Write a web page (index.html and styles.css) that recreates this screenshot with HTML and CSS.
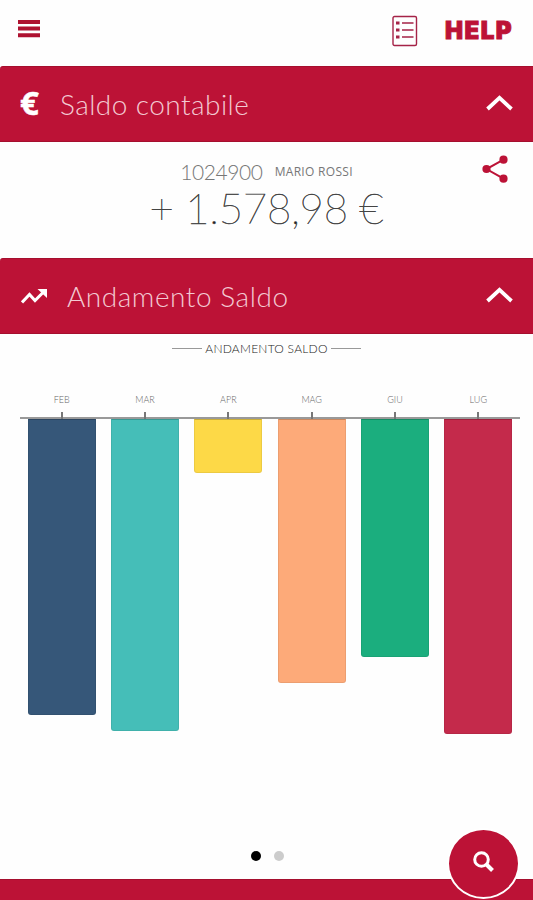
FILE: index.html
```html
<!DOCTYPE html>
<html lang="it">
<head>
<meta charset="utf-8">
<title>Saldo contabile</title>
<link rel="stylesheet" href="styles.css">
</head>
<body>
<div class="app">
  <header class="topbar">
    <svg class="menu" viewBox="0 0 22 18"><path d="M0 2h22M0 8.5h22M0 15.2h22"/></svg>
    <div class="actions">
      <svg class="list" viewBox="0 0 26 32"><rect x="1" y="1.5" width="23.5" height="29" rx="1.5"/><path d="M10 8h11.5M10 15h11.5M10 22h11.5"/><path class="bullets" d="M4 8h3.5M4 15h3.5M4 22h3.5"/></svg>
      <span class="help">HELP</span>
    </div>
  </header>
  <section>
    <div class="section-bar">
      <span class="euro">€</span>
      <h2 class="title">Saldo contabile</h2>
      <svg class="chevron" viewBox="0 0 27 16"><path d="M1.5 14 13.5 2.8 25.5 14"/></svg>
    </div>
    <div class="balance">
      <div class="account"><span class="number">1024900</span><span class="owner">MARIO ROSSI</span></div>
      <div class="amount">+ 1.578,98 €</div>
      <svg class="share" viewBox="0 0 26 28"><path d="M21.5 4.7 4.5 14l17 9.7"/><circle cx="21.5" cy="4.7" r="4.1"/><circle cx="4.5" cy="14" r="4.1"/><circle cx="21.5" cy="23.7" r="4.1"/></svg>
    </div>
  </section>
  <section class="trend">
    <div class="section-bar">
      <svg class="trend-icon" viewBox="0 0 27 16"><path class="line" d="M1 14.5 8.5 6.5l5.5 6 8.5-8.5"/><path class="tip" d="M16.5 1H26v9z"/></svg>
      <h2 class="title trend-title">Andamento Saldo</h2>
      <svg class="chevron" viewBox="0 0 27 16"><path d="M1.5 14 13.5 2.8 25.5 14"/></svg>
    </div>
    <div class="caption"><span>ANDAMENTO SALDO</span></div>
    <div class="chart">
      <div class="month"><span class="label">FEB</span><div class="bar navy" style="height:296px"></div></div>
      <div class="month"><span class="label">MAR</span><div class="bar teal" style="height:312px"></div></div>
      <div class="month"><span class="label">APR</span><div class="bar yellow" style="height:54px"></div></div>
      <div class="month"><span class="label">MAG</span><div class="bar orange" style="height:264px"></div></div>
      <div class="month"><span class="label">GIU</span><div class="bar green" style="height:238px"></div></div>
      <div class="month"><span class="label">LUG</span><div class="bar crimson" style="height:315px"></div></div>
    </div>
    <div class="dots"><i class="dot active"></i><i class="dot"></i></div>
  </section>
  <div class="next-section"></div>
  <div class="search"><svg viewBox="0 0 22 22"><circle cx="8.5" cy="8.5" r="6.8"/><path d="m13.5 13.5 6 6"/></svg></div>
</div>
</body>
</html>
```
FILE: styles.css
```css
* { box-sizing: border-box; }
body { margin: 0; background: #fefefe; font-family: Lato, "Liberation Sans", sans-serif; }
svg { display: block; fill: none; flex: none; }
.app { position: relative; height: 900px; overflow: hidden; display: flex; flex-direction: column; }
.topbar { height: 66px; flex: none; display: flex; justify-content: space-between; padding: 15px 20px 0 18px; }
.menu { width: 22px; height: 18px; margin-top: 5px; stroke: #ae1230; stroke-width: 4; }
.actions { display: flex; }
.list { width: 26px; height: 32px; margin-right: 27px; stroke: #a52347; stroke-width: 1.4; }
.list .bullets { stroke-width: 3; }
.help { width: 68px; font: 900 24px/32px Inter, sans-serif; letter-spacing: 1.5px; color: #bc1237; -webkit-text-stroke: 1px #bc1237; }
.section-bar { height: 76px; background: #bc1236; border-top: 1px solid #a50f2e; border-bottom: 1px solid #a50f2e; border-top-left-radius: 3px; display: flex; align-items: center; padding: 0 20px; color: #fff; }
.euro { width: 40px; font: 700 33px/40px "Open Sans", sans-serif; margin-top: -2px; -webkit-text-stroke: .5px #fff; }
.title { margin: -1px 0 0; flex: 1; font-size: 28px; font-weight: 300; letter-spacing: .45px; color: #f3c9d2; white-space: nowrap; }
.trend-title { letter-spacing: .55px; }
.chevron { width: 27px; height: 16px; stroke: #fff; stroke-width: 3.8; margin-top: -3px; }
.balance { position: relative; height: 116px; padding-top: 15px; text-align: center; }
.account { display: flex; justify-content: center; align-items: center; gap: 12px; height: 28px; color: #777; }
.number { font-size: 21px; font-weight: 300; letter-spacing: -.4px; }
.owner { font: 12px "Open Sans", sans-serif; letter-spacing: .3px; }
.amount { font-size: 42px; line-height: 46px; font-weight: 200; letter-spacing: -.3px; color: #222; -webkit-text-stroke: .5px #444; }
.share { position: absolute; left: 482px; top: 13px; width: 26px; height: 28px; stroke: #bc1236; stroke-width: 2; }
.share circle { fill: #bc1236; stroke: none; }
.trend { flex: 1; display: flex; flex-direction: column; }
.trend .section-bar { flex: none; }
.trend-icon { width: 27px; height: 16px; margin: 0 19px 0 1px; stroke: #fff; stroke-width: 3; }
.trend-icon .tip { fill: #fff; stroke: none; }
.caption { height: 28px; display: flex; justify-content: center; align-items: center; gap: 3px; font-size: 12px; font-weight: 300; letter-spacing: .25px; color: #222; }
.caption::before, .caption::after { content: ""; width: 30px; height: 1px; background: #999; }
.chart { height: 356px; margin: 32px 13px 0 20px; display: grid; grid-template-columns: repeat(6, 1fr); align-items: start; background: linear-gradient(#999, #999) 0 23px / 100% 2px no-repeat; }
.month { display: flex; flex-direction: column; align-items: center; }
.label { height: 25px; font-size: 9px; line-height: 12px; font-weight: 300; color: #666; background: linear-gradient(#777, #777) 50% 100% / 2px 7px no-repeat; }
.bar { width: 68px; border-radius: 0 0 3px 3px; border: 1px solid #0001; border-top-color: #0003; }
.navy { background: #365779; }
.teal { background: #45beb8; }
.yellow { background: #fdd947; }
.orange { background: #fdaa79; }
.green { background: #1bae7e; }
.crimson { background: #c42a4b; }
.dots { display: flex; justify-content: center; gap: 13px; margin: 101px 0 0 1px; }
.dot { width: 10px; height: 10px; border-radius: 50%; background: #ccc; }
.dot.active { background: #000; }
.next-section { height: 21px; flex: none; background: #bc1236; border-top: 1px solid #a50f2e; }
.search { position: absolute; left: 447px; top: 828px; width: 73px; height: 71px; border: 2px solid #fff; border-radius: 50%; background: #bc1236; display: flex; align-items: center; justify-content: center; }
.search svg { width: 22px; height: 22px; margin-top: -3px; stroke: #fff; stroke-width: 3; }
.search path { stroke-width: 4; }
```
